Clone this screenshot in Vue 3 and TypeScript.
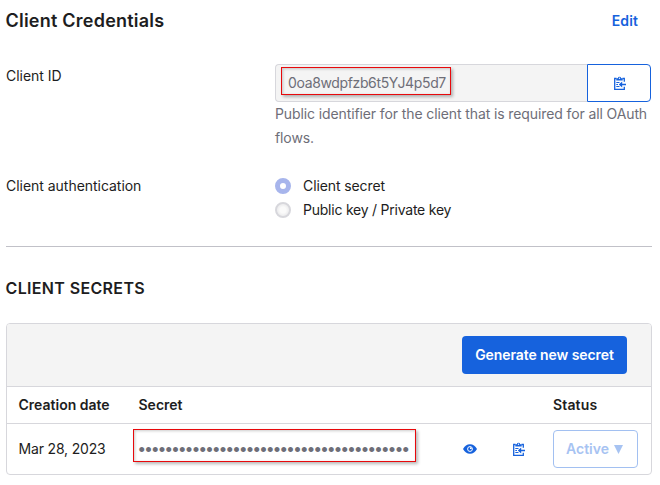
<script setup lang="ts">
import { ref } from 'vue'

interface ClientSecret {
  created: string
  length: number
  status: string
}

const clientId = ref('0oa8wdpfzb6t5YJ4p5d7')
const method = ref('secret')
const methods = [
  { id: 'secret', label: 'Client secret' },
  { id: 'key', label: 'Public key / Private key' },
]
const secrets: ClientSecret[] = [{ created: 'Mar 28, 2023', length: 40, status: 'Active' }]
</script>

<template>
  <main class="page">
    <svg class="defs" width="0" height="0" aria-hidden="true">
      <symbol id="clipboard" viewBox="0 0 12 14">
        <path d="M2.500 2.500H.7v10.800h9.600V10.800M8.500 2.500h1.800v3.300" fill="none" stroke="currentColor" stroke-width="1.300" />
        <path d="M2.300 4.400V2.200h1.500a1.750 1.750 0 0 1 3.400 0h1.500v2.200z" fill="currentColor" />
        <circle cx="5.500" cy="2.200" r=".7" fill="#fff" />
        <path d="M2.300 6.500h3.200M2.300 8.500h1.700M2.300 10.500h3.200" fill="none" stroke="currentColor" stroke-width="1" />
        <path d="M4.800 8.500 8.200 5.500v2.200H12v1.600H8.200v2.200z" fill="currentColor" />
      </symbol>
    </svg>

    <header class="head">
      <h2 class="title">Client Credentials</h2>
      <a class="edit">Edit</a>
    </header>

    <section class="field id-field">
      <label class="label">Client ID</label>
      <div class="control">
        <div class="group">
          <div class="input"><span class="mark">{{ clientId }}</span></div>
          <button class="copy"><svg class="clip"><use href="#clipboard" /></svg></button>
        </div>
        <p class="help">Public identifier for the client that is required for all OAuth<br>flows.</p>
      </div>
    </section>

    <section class="field auth-field">
      <label class="label">Client authentication</label>
      <div class="control">
        <div v-for="m in methods" :key="m.id" class="option" @click="method = m.id">
          <span class="radio" :class="{ on: m.id === method }"></span>
          <span :class="'m-' + m.id">{{ m.label }}</span>
        </div>
      </div>
    </section>

    <h3 class="subtitle">CLIENT SECRETS</h3>

    <section class="card">
      <div class="toolbar"><button class="generate">Generate new secret</button></div>
      <div class="row thead">
        <span>Creation date</span>
        <span>Secret</span>
        <span></span><span></span>
        <span class="th-status">Status</span>
      </div>
      <div v-for="s in secrets" :key="s.created" class="row body">
        <span class="date">{{ s.created }}</span>
        <div class="mark dots">{{ '•'.repeat(s.length) }}</div>
        <svg class="eye" viewBox="0 0 14 10">
          <path d="M0 5C1.600 1.900 4 .3 7 .3S12.400 1.900 14 5C12.400 8.100 10 9.700 7 9.700S1.600 8.100 0 5z" fill="currentColor" />
          <circle cx="7" cy="5" r="2.400" fill="none" stroke="#fff" stroke-width="1" />
          <path d="M7 5V3.200A1.800 1.800 0 0 1 8.800 5z" fill="#fff" />
        </svg>
        <svg class="clip"><use href="#clipboard" /></svg>
        <button class="status"><span>{{ s.status }}</span><svg class="caret" viewBox="0 0 9 9"><path d="M0 0h9L4.500 9z" fill="currentColor" /></svg></button>
      </div>
    </section>
  </main>
</template>

<style>
body { background: #fff; }
</style>

<style scoped>
.page {
  box-sizing: border-box;
  width: 660px;
  height: 485px;
  padding: 0 8px 0 6px;
  overflow: hidden;
  color: #1d1d21;
  font: 14px/24px Inter, "Liberation Sans", sans-serif;
  white-space: nowrap;
}
.defs { display: block; }
h2, h3, p { margin: 0; }
button { box-sizing: border-box; margin: 0; padding: 0; font: inherit; cursor: pointer; }
.head { display: flex; justify-content: space-between; height: 64px; padding: 9px 14px 0 0; box-sizing: border-box; }
.title { margin-left: -0.5px; font-size: 18px; font-weight: 600; line-height: 24px; letter-spacing: 0.23px; }
.edit { color: #1662dd; font-weight: 600; letter-spacing: 0.1px; }
.field { display: flex; }
.id-field { height: 110px; }
.auth-field { box-sizing: border-box; height: 73px; border-bottom: 1px solid #c1c1c8; }
.label { box-sizing: border-box; width: 269px; flex: none; letter-spacing: -0.03px; }
.control { width: 376px; }
.group { display: flex; height: 38px; }
.input {
  box-sizing: border-box;
  width: 312px;
  padding: 2px 0 0 5px;
  border: 1px solid #d7d7dc;
  border-right: 0;
  border-radius: 4px 0 0 4px;
  background: #f4f4f4;
}
.mark {
  display: block;
  box-sizing: border-box;
  border: 1px solid #e8090c;
  box-shadow: 2px 2px 3px rgba(0, 0, 0, 0.28), inset 1px 1px 3px rgba(0, 0, 0, 0.2);
}
.input .mark { width: 170px; height: 28px; padding: 3px 0 0 6px; color: #6e6e78; letter-spacing: -0.36px; }
.copy { display: flex; align-items: center; justify-content: center; width: 64px; padding-left: 1px; border: 1px solid #1662dd; border-radius: 0 4px 4px 0; background: #fff; color: #1662dd; }
.clip { display: block; width: 12px; height: 14px; color: #1662dd; }
.help { color: #6e6e78; letter-spacing: -0.11px; }
.option { display: flex; align-items: center; height: 24px; }
.radio { box-sizing: border-box; width: 16px; height: 16px; margin-right: 12px; border: 2px solid #d7d7dc; border-radius: 50%; background: radial-gradient(circle, #fafafa 3px, #f0f0f1 5px); }
.radio.on { border: 5px solid #a7b5ec; background: #fff; }
.m-secret { letter-spacing: -0.1px; }
.m-key { letter-spacing: -0.23px; }
.subtitle { height: 76px; padding-top: 29px; box-sizing: border-box; margin-left: -0.5px; font-size: 16px; font-weight: 600; line-height: 24px; letter-spacing: 0.35px; }
.card { box-sizing: border-box; width: 646px; height: 152px; border: 1px solid #d7d7dc; border-radius: 4px; overflow: hidden; }
.toolbar { display: flex; justify-content: flex-end; box-sizing: border-box; height: 62px; padding: 12px 24px 0 0; background: #f4f4f4; }
.generate { width: 165px; height: 38px; border: 0; border-radius: 4px; background: #1662dd; color: #fff; font-weight: 600; letter-spacing: -0.08px; }
.row { display: grid; grid-template-columns: 119.5px 324.5px 50px 40px 85px; padding-left: 12px; border-top: 1px solid #d7d7dc; align-items: center; }
.thead { height: 36px; padding-left: 11.5px; grid-template-columns: 120px 324.5px 50px 40px 85px; font-weight: 600; }
.th-status { letter-spacing: 0.15px; }
.body { height: 50px; }
.date { margin-left: -0.5px; letter-spacing: -0.17px; }
.dots { width: 283px; height: 33px; margin: -7px 0 0 -5.5px; padding: 0 0 0 4.5px; color: #6e6e78; font: 18.5px/39px "Liberation Sans", sans-serif; letter-spacing: 0.29px; }
.eye { display: block; width: 14px; height: 10px; color: #1662dd; }
.status { display: flex; align-items: center; height: 38px; padding: 0 0 0 12px; border: 1px solid #a2c0f1; border-radius: 4px; background: #fff; color: #a7c3f2; font-weight: 600; }
.caret { width: 9px; height: 9px; margin-left: 5px; }
</style>
